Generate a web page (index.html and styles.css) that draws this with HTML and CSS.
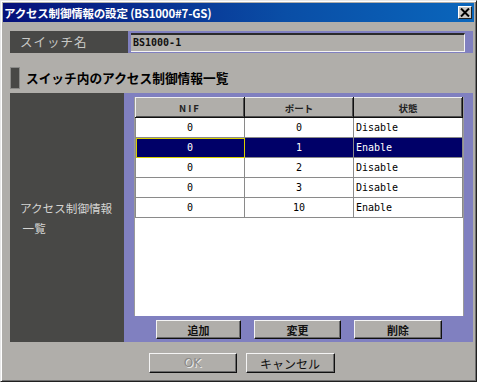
FILE: index.html
```html
<!DOCTYPE html>
<html lang="ja">

<head>
    <meta charset="UTF-8" />
    <title>アクセス制御情報の設定</title>
    <link rel="stylesheet" href="styles.css">
</head>

<body>
    <div class="dialog">
        <div class="titlebar">
            <span class="title">アクセス制御情報の設定 (BS1000#7-GS)</span>
            <span class="close">
                <svg width="10" height="9" viewBox="0 0 10 9">
                    <path d="M1 0.5 L9 8.5 M9 0.5 L1 8.5" stroke="#000" stroke-width="2" />
                </svg>
            </span>
        </div>

        <div class="content">
            <div class="name-row">
                <div class="name-label">スイッチ名</div>
                <div class="field-wrap">
                    <div class="field">BS1000-1</div>
                </div>
            </div>

            <div class="section">
                <span class="marker"></span>
                <h2>スイッチ内のアクセス制御情報一覧</h2>
            </div>

            <div class="list-area">
                <div class="side-label">
                    <span>アクセス制御情報<br>&nbsp;一覧</span>
                </div>
                <div class="panel">
                    <div class="table-box">
                        <table class="acl">
                            <thead>
                                <tr>
                                    <th class="nif">NIF</th>
                                    <th>ポート</th>
                                    <th>状態</th>
                                </tr>
                            </thead>
                            <tbody>
                                <tr><td>0</td><td>0</td><td class="state">Disable</td></tr>
                                <tr class="selected"><td class="focus">0</td><td>1</td><td class="state">Enable</td></tr>
                                <tr><td>0</td><td>2</td><td class="state">Disable</td></tr>
                                <tr><td>0</td><td>3</td><td class="state">Disable</td></tr>
                                <tr><td>0</td><td>10</td><td class="state">Enable</td></tr>
                            </tbody>
                        </table>
                    </div>
                    <div class="panel-buttons">
                        <button class="btn btn-add">追加</button>
                        <button class="btn btn-edit">変更</button>
                        <button class="btn btn-del">削除</button>
                    </div>
                </div>
            </div>

            <div class="footer">
                <button class="btn btn-ok" disabled>OK</button>
                <button class="btn btn-cancel">キャンセル</button>
            </div>
        </div>
    </div>
</body>

</html>
```

FILE: styles.css
```css
body {
    margin: 0;
    background: #fff;
    font-family: "Noto Sans CJK JP", "DejaVu Sans", sans-serif;
}

.dialog {
    width: 475px;
    height: 380px;
    background: #b0aeaa;
    border: 1px solid;
    border-color: #e8e8e8 #202020 #202020 #e8e8e8;
    box-shadow: inset 1px 1px #ffffff, inset -1px -1px #707070;
}

.titlebar {
    margin: 2px 2px 0 2px;
    height: 19px;
    display: flex;
    align-items: center;
    justify-content: space-between;
    padding: 0 2px 0 1px;
    background: linear-gradient(to right, #06107a, #0a4ea6 60%, #0a66bc);
}

.title {
    color: #fff;
    font-size: 11.5px;
    font-weight: bold;
    white-space: nowrap;
    letter-spacing: -0.2px;
}

.close {
    width: 14px;
    height: 13px;
    display: flex;
    align-items: center;
    justify-content: center;
    background: #c8c6c2;
    border: 1px solid;
    border-color: #ffffff #202020 #202020 #ffffff;
    box-sizing: border-box;
}

.content {
    padding: 0 3px 0 9px;
}

.name-row {
    display: flex;
    margin-top: 9px;
    height: 22px;
}

.name-label {
    width: 118px;
    background: #484846;
    color: #c8c8c6;
    font-size: 12.5px;
    line-height: 22px;
    padding-left: 10px;
    box-sizing: border-box;
    letter-spacing: 1px;
}

.field-wrap {
    flex: 1;
    background: #8080c0;
    padding: 2px 8px 1px 3px;
    display: flex;
}

.field {
    flex: 1;
    background: #b0aeaa;
    border-top: 2px solid #2a2a2a;
    border-right: 1px solid #f4f4f4;
    border-bottom: 1px solid #f4f4f4;
    font-family: "DejaVu Sans Mono", monospace;
    font-size: 10px;
    font-weight: bold;
    line-height: 16px;
    padding-left: 2px;
    color: #101010;
}

.section {
    display: flex;
    align-items: center;
    margin-top: 13px;
    height: 23px;
}

.marker {
    width: 10px;
    height: 22px;
    background: #484846;
    border: 1px solid #8a8a88;
    box-sizing: border-box;
}

.section h2 {
    margin: 0 0 0 6px;
    font-size: 12.7px;
    font-weight: bold;
    color: #000;
}

.list-area {
    display: flex;
    margin-top: 4px;
    height: 249px;
}

.side-label {
    width: 114px;
    background: #484846;
    color: #d4d4d2;
    font-size: 11.6px;
    line-height: 20px;
    display: flex;
    align-items: center;
    padding-left: 10px;
    box-sizing: border-box;
}

.panel {
    flex: 1;
    background: #8080c0;
    padding: 4px 9px 3px 10px;
    display: flex;
    flex-direction: column;
}

.table-box {
    height: 219px;
    background: #fff;
    border-left: 1px solid #9a9a9a;
    border-right: 1px solid #9a9a9a;
    box-sizing: border-box;
}

.acl {
    width: 100%;
    border-collapse: collapse;
    table-layout: fixed;
    font-family: "DejaVu Sans Mono", monospace;
    font-size: 10px;
}

.acl th {
    height: 20px;
    padding: 0;
    background: #b0aeaa;
    border: 1px solid;
    border-color: #f0f0f0 #101010 #101010 #f0f0f0;
    box-shadow: inset -1px -1px #505050;
    font-family: "Noto Sans CJK JP", sans-serif;
    font-size: 9.5px;
    font-weight: bold;
    color: #222;
    box-sizing: border-box;
}

.acl th.nif {
    letter-spacing: 2px;
}

.acl td {
    height: 19px;
    padding: 0;
    text-align: center;
    border: 1px solid #8a8a8a;
    border-top: none;
    color: #000;
}

.acl td.state {
    text-align: left;
    padding-left: 2px;
}

.acl tr.selected td {
    background: #000068;
    color: #fff;
}

.acl td.focus {
    outline: 1px solid #d8d000;
    outline-offset: -1px;
}

.panel-buttons {
    display: flex;
    gap: 13px;
    margin-top: 4px;
    padding-left: 22px;
}

.btn {
    height: 19px;
    padding: 0;
    background: #b0aeaa;
    border: 1px solid;
    border-color: #f4f4f4 #101010 #101010 #f4f4f4;
    box-shadow: inset -1px -1px #6a6a6a;
    font-family: "Noto Sans CJK JP", sans-serif;
    font-size: 11px;
    font-weight: bold;
    color: #111;
    box-sizing: border-box;
}

.btn-add {
    width: 85px;
}

.btn-edit {
    width: 87px;
}

.btn-del {
    width: 88px;
}

.footer {
    display: flex;
    justify-content: center;
    gap: 9px;
    margin-top: 11px;
}

.footer .btn {
    height: 20px;
    font-weight: normal;
    font-size: 12px;
}

.btn-ok {
    width: 88px;
    color: #8a8a88;
    text-shadow: 1px 1px #ececec;
    font-family: "DejaVu Sans", sans-serif;
}

.btn-cancel {
    width: 89px;
}
```
